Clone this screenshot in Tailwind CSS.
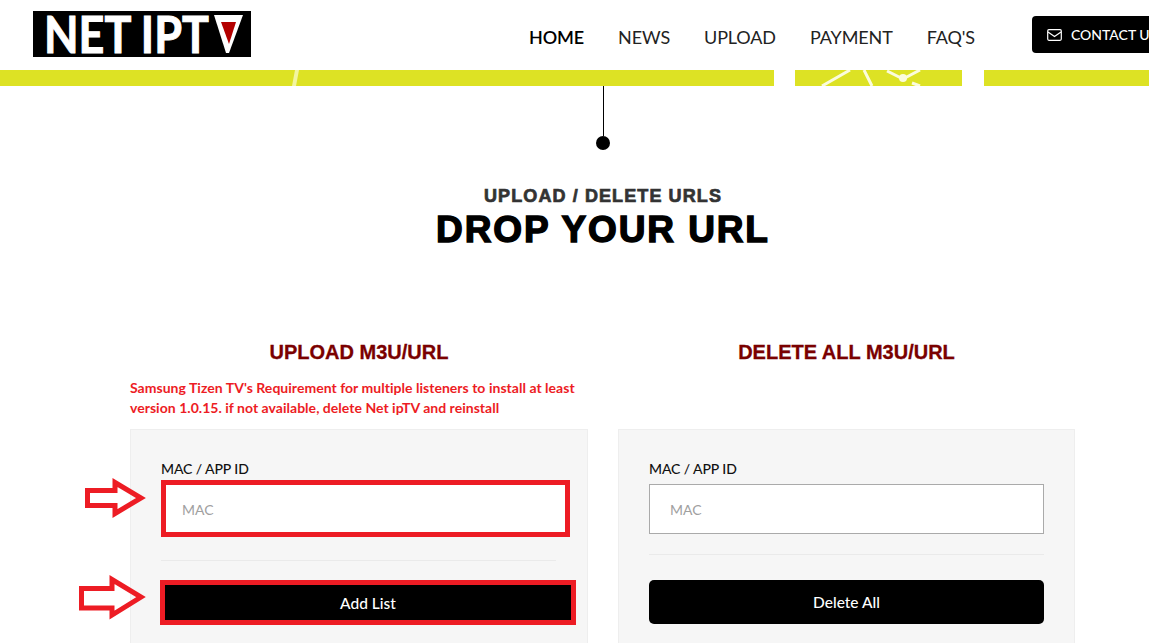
<!DOCTYPE html>
<html lang="en">
<head>
  <meta charset="UTF-8">
  <meta name="viewport" content="width=device-width, initial-scale=1">
  <title>Net IPTV</title>
  <script src="https://cdn.jsdelivr.net/npm/@tailwindcss/browser@4"></script>
</head>
<body class="bg-white h-[643px] overflow-hidden font-['Lato','Liberation_Sans',sans-serif]">
<div class="w-[1206px]">

  <!-- header -->
  <header class="h-[70px] flex items-start whitespace-nowrap">
    <div class="ml-[33px] mt-[11px] w-[218px] h-[46px] shrink-0 bg-black flex items-center pl-[11px]">
      <span class="inline-block origin-left scale-x-[0.88] text-white font-bold text-[51px] leading-[46px] w-[170px] shrink-0 [-webkit-text-stroke:1px_#fff]">NET IPT</span>
      <svg class="w-[30px] h-[38px] shrink-0 -ml-[1px]" viewBox="0 0 30 38">
        <path d="M1 0H30L16 38H13Z" fill="#fff"/>
        <path d="M8 7H23L16 29Z" fill="#b30000"/>
      </svg>
    </div>
    <nav class="ml-[278px] mt-[26px] flex gap-[34px] text-[18px] leading-[22px] tracking-[-0.12px] text-[#222] shrink-0">
      <a class="font-semibold text-black">HOME</a>
      <a>NEWS</a>
      <a>UPLOAD</a>
      <a>PAYMENT</a>
      <a>FAQ'S</a>
    </nav>
    <a class="ml-[57px] mt-[16px] w-[140px] h-[37px] shrink-0 bg-black rounded-[4px] flex items-center pl-[15px] gap-[9px] text-white text-[14px] font-medium">
      <svg class="w-[15px] h-[12px]" viewBox="0 0 15 12" fill="none" stroke="#fff" stroke-width="1.2">
        <rect x="0.7" y="0.7" width="13.6" height="10.6" rx="1.2"/>
        <path d="M1 3l6.5 4.5L14 3"/>
      </svg>
      CONTACT US
    </a>
  </header>

  <!-- lime band -->
  <div class="h-[16px] bg-[#dde224]">
    <svg class="w-[1206px] h-[16px]" viewBox="0 70 1206 16">
      <path d="M295 70h4l-3 16h-4Z" fill="#f2f5a0"/>
      <path d="M774 70h21v16h-21ZM962 70h22v16h-22Z" fill="#fff"/>
      <path d="M822 86L850 70M864 70L872 86M887 71L903 79M903 79L920 70M912 83L920 86" stroke="#fbfcdc" stroke-width="3" fill="none"/>
      <circle cx="903" cy="78" r="4" fill="#fbfcdc"/>
    </svg>
  </div>

  <main class="relative">
    <!-- section title -->
    <div class="flex flex-col items-center">
      <div class="w-[1px] h-[50px] bg-black"></div>
      <div class="w-[14px] h-[14px] rounded-full bg-black"></div>
      <h3 class="mt-[36px] text-[18px] leading-[20px] font-bold tracking-[1.1px] text-[#333] font-['Liberation_Sans',sans-serif] [-webkit-text-stroke:0.7px_#333]">UPLOAD / DELETE URLS</h3>
      <h2 class="mt-[3px] text-[37px] leading-[42px] font-bold tracking-[1.9px] text-black font-['Liberation_Sans',sans-serif] [-webkit-text-stroke:1.4px_#000]">DROP YOUR URL</h2>
    </div>

    <!-- columns -->
    <div class="mt-[89px] ml-[130px] w-[945px] grid grid-cols-[458px_457px] gap-x-[30px]">
      <div>
        <h4 class="text-center text-[20px] leading-[24px] font-bold text-[#7a0000] font-['Liberation_Sans',sans-serif] [-webkit-text-stroke:0.3px_#7a0000]">UPLOAD M3U/URL</h4>
        <p class="mt-[14px] h-[51px] text-[14px] leading-[20px] font-bold tracking-[0.03px] text-[#ed1c24]">Samsung Tizen TV's Requirement for multiple listeners to install at least version 1.0.15. if not available, delete Net ipTV and reinstall</p>
        <div class="h-[300px] bg-[#f6f6f6] border border-[#eeeeee] pl-[30px] pt-[30px]">
          <label class="block text-[14px] leading-[17px] font-medium tracking-[-0.1px] text-[#111]">MAC / APP ID</label>
          <div class="mt-[3px] w-[409px] h-[57px] border-[5px] border-[#ed1c24] bg-white pl-[16px] pt-[16px] text-[14px] leading-[17px] text-[#a0a0a0]">MAC</div>
          <div class="mt-[23px] w-[395px] h-[1px] bg-[#eaeaea]"></div>
          <button class="-ml-[1px] mt-[19px] w-[416px] h-[45px] pt-[2px] border-[5px] border-[#ed1c24] bg-black text-white text-[15.5px] font-medium">Add List</button>
        </div>
      </div>
      <div>
        <h4 class="text-center text-[20px] leading-[24px] font-bold text-[#7a0000] font-['Liberation_Sans',sans-serif] [-webkit-text-stroke:0.3px_#7a0000]">DELETE ALL M3U/URL</h4>
        <div class="mt-[65px] h-[300px] bg-[#f6f6f6] border border-[#eeeeee] pl-[30px] pt-[30px]">
          <label class="block text-[14px] leading-[17px] font-medium tracking-[-0.1px] text-[#111]">MAC / APP ID</label>
          <div class="mt-[7px] w-[395px] h-[50px] border border-[#aaaaaa] bg-white pl-[20px] pt-[16px] text-[14px] leading-[17px] text-[#a0a0a0]">MAC</div>
          <div class="mt-[20px] w-[395px] h-[1px] bg-[#eaeaea]"></div>
          <button class="mt-[25px] w-[395px] h-[44px] pt-[2px] rounded-[5px] bg-black text-white text-[15.5px] font-medium">Delete All</button>
        </div>
      </div>
    </div>

    <!-- red annotation arrows -->
    <svg class="absolute left-[78px] top-[390px] w-[72px] h-[150px]" viewBox="78 476 72 150" fill="none" stroke="#ed1c24" stroke-width="5">
      <path d="M87.5 490.5H115V482.5L141 498L115 513.5V505.5H87.5Z"/>
      <path d="M81.5 588.5H112V579.5L141 597L112 615V608H81.5Z"/>
    </svg>
  </main>
</div>
</body>
</html>
